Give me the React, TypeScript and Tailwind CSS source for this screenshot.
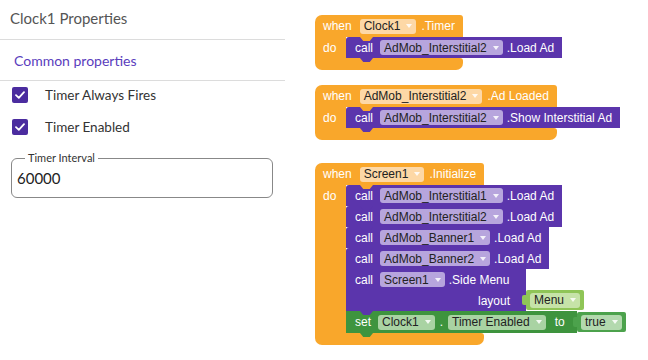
import type { ReactNode } from "react"

// Block palette
const ORANGE = "bg-[#f9a72b]"
const ORANGE_FIELD = "bg-[#fdd8a6]"
const PURPLE = "bg-[#5b35ac]"
const PURPLE_FIELD = "bg-[#b7a5dd]"
const GREEN = "bg-[#3e943e]"
const GREEN_FIELD = "bg-[#a9d3a3]"
const LIME = "bg-[#8fc557]"
const LIME_FIELD = "bg-[#c6e3a8]"
const TRUE_GREEN = "bg-[#4ca24c]"
const TRUE_FIELD = "bg-[#b3d9ae]"

const TAB = "absolute top-full w-[13px] h-[4px] z-10 [clip-path:polygon(0_0,100%_0,75%_100%,25%_100%)]"

function Field({ label, bg }: { label: string; bg: string }) {
  return (
    <span className={`flex items-center h-[15px] pl-[4px] pr-[4px] gap-[6px] rounded-[3px] text-[#222] ${bg}`}>
      <span className="leading-none">{label}</span>
      <svg width="6" height="4" viewBox="0 0 6 4">
        <path d="M0 0H6L3 4Z" fill="white" fillOpacity="0.85" />
      </svg>
    </span>
  )
}

function Stmt({ children, bg }: { children: ReactNode; bg: string }) {
  return (
    <div className={`relative flex items-center h-[21px] w-max pl-[9px] pr-[8px] gap-[7px] rounded-tl-[3px] ${bg}`}>
      {children}
      <span className={`${TAB} left-[14px] ${bg}`} />
    </div>
  )
}

function ValueBlock({ label, bg, field, className }: { label: string; bg: string; field: string; className: string }) {
  return (
    <div className={`absolute left-full flex items-center h-[20px] px-[4px] rounded-[2px] ${bg} ${className}`}>
      <span className={`absolute right-full top-[5px] w-[4px] h-[10px] rounded-l-[2px] ${bg}`} />
      <Field label={label} bg={field} />
    </div>
  )
}

function Event({ head, children, top }: { head: ReactNode; children: ReactNode; top: string }) {
  return (
    <div className={`absolute left-[30px] flex flex-col text-white ${top}`}>
      <div className={`relative flex items-center h-[22px] pl-[8px] pr-[8px] gap-[8px] rounded-tl-[7px] rounded-tr-[3px] ${ORANGE}`}>
        {head}
        <span className={`${TAB} left-[45px] ${ORANGE}`} />
      </div>
      <div className="flex">
        <div className={`w-[31px] pl-[8px] ${ORANGE}`}>
          <div className="h-[21px] flex items-center">do</div>
        </div>
        <div className="w-0 flex flex-col">{children}</div>
      </div>
      <div className={`h-[12px] rounded-b-[7px] rounded-tr-[3px] ${ORANGE}`} />
    </div>
  )
}

function Check({ label }: { label: string }) {
  return (
    <div className="flex items-center h-[16px] gap-[17px]">
      <span className="w-[16px] h-[16px] rounded-[2px] bg-[#4b2c9f] flex items-center justify-center">
        <svg width="10" height="8" viewBox="0 0 10 8">
          <path d="M1 4.2L3.8 6.8L9 1.2" fill="none" stroke="white" strokeWidth="1.8" strokeLinecap="round" strokeLinejoin="round" />
        </svg>
      </span>
      <span className="text-[13.5px] text-[#333]">{label}</span>
    </div>
  )
}

export default function App() {
  return (
    <div className="w-[648px] h-[360px] flex bg-white overflow-hidden">

      {/* Properties panel */}
      <div className="w-[285px] shrink-0 flex flex-col font-['Lato',sans-serif]">
        <div className="h-[40px] border-b border-[#dcdcdc] flex items-center pl-[10px] pb-[2px] text-[15px] text-[#555]">
          Clock1 Properties
        </div>
        <div className="h-[41px] border-b border-[#dcdcdc] flex items-center pl-[14px] text-[14px] text-[#5a3dbd]">
          Common properties
        </div>
        <div className="flex flex-col pt-[6px] pl-[12px] gap-[16px]">
          <Check label="Timer Always Fires" />
          <Check label="Timer Enabled" />
        </div>
        <div className="relative mt-[23px] ml-[11px] w-[262px] h-[40px] border border-[#888] rounded-[6px] flex items-center pl-[5px] text-[15px] text-[#222]">
          <span className="absolute -top-[8px] left-[13px] bg-white px-[3px] text-[11px] leading-[14px] text-[#333]">
            Timer Interval
          </span>
          60000
        </div>
      </div>

      {/* Blocks workspace */}
      <div className="relative flex-1 font-['Liberation_Sans',Arial,sans-serif] text-[12px]">

        <Event
          top="top-[15px]"
          head={<>
            <span>when</span>
            <Field label="Clock1" bg={ORANGE_FIELD} />
            <span className="-ml-[3px]">.Timer</span>
          </>}
        >
          <Stmt bg={PURPLE}>
            <span>call</span>
            <Field label="AdMob_Interstitial2" bg={PURPLE_FIELD} />
            <span className="-ml-[3px]">.Load Ad</span>
          </Stmt>
        </Event>

        <Event
          top="top-[85px]"
          head={<>
            <span>when</span>
            <Field label="AdMob_Interstitial2" bg={ORANGE_FIELD} />
            <span className="-ml-[3px]">.Ad Loaded</span>
          </>}
        >
          <Stmt bg={PURPLE}>
            <span>call</span>
            <Field label="AdMob_Interstitial2" bg={PURPLE_FIELD} />
            <span className="-ml-[3px]">.Show Interstitial Ad</span>
          </Stmt>
        </Event>

        <Event
          top="top-[163px]"
          head={<>
            <span>when</span>
            <Field label="Screen1" bg={ORANGE_FIELD} />
            <span className="-ml-[3px]">.Initialize</span>
          </>}
        >
          {["AdMob_Interstitial1", "AdMob_Interstitial2", "AdMob_Banner1", "AdMob_Banner2"].map((name) => (
            <Stmt key={name} bg={PURPLE}>
              <span>call</span>
              <Field label={name} bg={PURPLE_FIELD} />
              <span className="-ml-[3px]">.Load Ad</span>
            </Stmt>
          ))}

          {/* Side menu call with value input */}
          <div className={`relative w-[180px] h-[42px] flex flex-col ${PURPLE}`}>
            <div className="flex items-center h-[21px] pl-[9px] gap-[7px]">
              <span>call</span>
              <Field label="Screen1" bg={PURPLE_FIELD} />
              <span className="-ml-[3px]">.Side Menu</span>
            </div>
            <div className="flex items-center justify-end h-[21px] pr-[16px]">layout</div>
            <ValueBlock label="Menu" bg={LIME} field={LIME_FIELD} className="top-[21px]" />
            <span className={`${TAB} left-[14px] ${PURPLE}`} />
          </div>

          {/* Setter */}
          <div className={`relative w-[231px] h-[22px] flex items-center pl-[9px] gap-[7px] ${GREEN}`}>
            <span>set</span>
            <Field label="Clock1" bg={GREEN_FIELD} />
            <span className="-mx-[2px]">.</span>
            <Field label="Timer Enabled" bg={GREEN_FIELD} />
            <span className="ml-[2px]">to</span>
            <ValueBlock label="true" bg={TRUE_GREEN} field={TRUE_FIELD} className="top-[1px]" />
            <span className={`${TAB} left-[14px] ${GREEN}`} />
          </div>
        </Event>
      </div>
    </div>
  )
}
